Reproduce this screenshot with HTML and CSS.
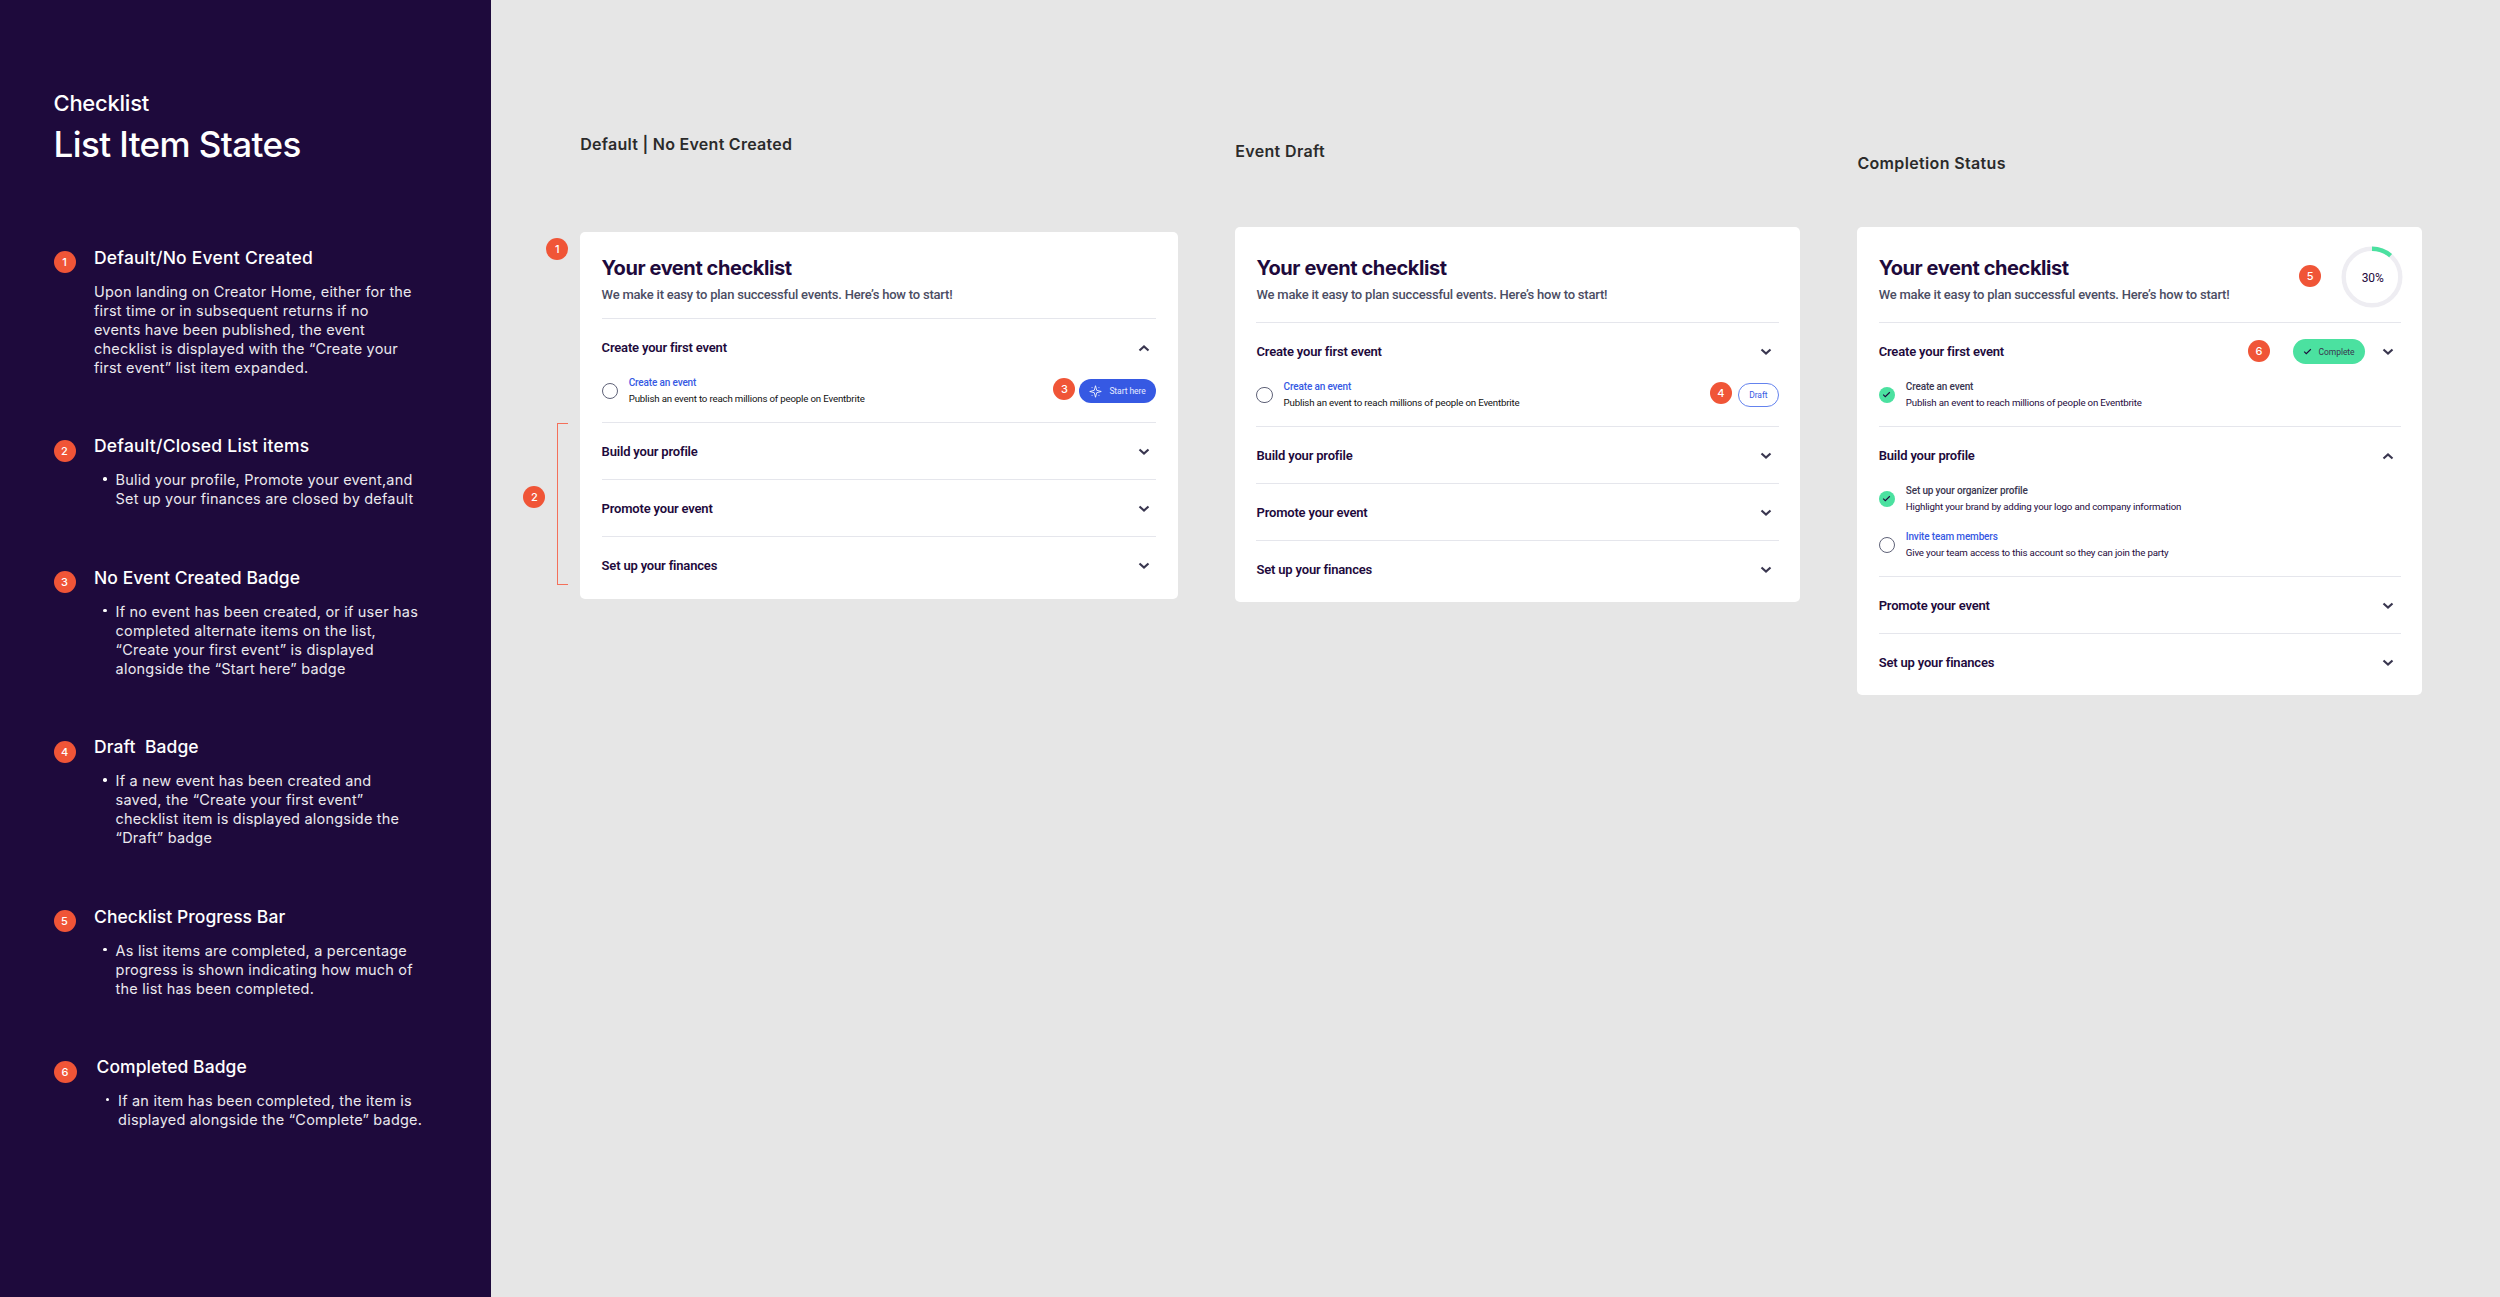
FILE: index.html
```html
<!DOCTYPE html>
<html lang="en">
<head>
  <meta charset="UTF-8">
  <meta name="viewport" content="width=device-width, initial-scale=1.0">
  <title>Checklist - List Item States</title>
  <link rel="stylesheet" href="styles.css">
</head>
<body>
  <!-- shared icons -->
  <svg class="sprite" width="0" height="0">
    <symbol id="chevron-down" viewBox="0 0 12 8">
      <path d="M1.5 1.4 L6 5.6 L10.5 1.4" fill="none" stroke="#39364f" stroke-width="2.1"/>
    </symbol>
    <symbol id="chevron-up" viewBox="0 0 12 8">
      <path d="M1.5 6.6 L6 2.4 L10.5 6.6" fill="none" stroke="#39364f" stroke-width="2.1"/>
    </symbol>
    <symbol id="check" viewBox="0 0 10 8">
      <path d="M1.2 4.2 L3.6 6.4 L8.8 1.4" fill="none" stroke="#1e0a3c" stroke-width="1.3"/>
    </symbol>
    <symbol id="spark" viewBox="0 0 14 14">
      <path d="M7 .8 L8.3 5.7 L13.2 7 L8.3 8.3 L7 13.2 L5.7 8.3 L.8 7 L5.7 5.7 Z" fill="none" stroke="#fff" stroke-width=".9"/>
      <path d="M2.8 2.8h1M10.2 2.8h1M2.8 11.2h1M10.2 11.2h1" stroke="#fff" stroke-width=".9"/>
    </symbol>
  </svg>

  <div class="page">
    <aside class="sidebar">
      <div class="eyebrow">Checklist</div>
      <h1>List Item States</h1>

      <div class="notes">
        <section class="note">
          <span class="marker">1</span>
          <div class="note-text">
            <h2 class="wide">Default/No Event Created</h2>
            <p>Upon landing on Creator Home, either for the<br>first time or in subsequent returns if no<br>events have been published, the event<br>checklist is displayed with the “Create your<br>first event” list item expanded.</p>
          </div>
        </section>
        <section class="note">
          <span class="marker">2</span>
          <div class="note-text">
            <h2 class="wide">Default/Closed List items</h2>
            <ul><li>Bulid your profile, Promote your event,and<br>Set up your finances are closed by default</li></ul>
          </div>
        </section>
        <section class="note">
          <span class="marker">3</span>
          <div class="note-text">
            <h2>No Event Created Badge</h2>
            <ul><li>If no event has been created, or if user has<br>completed alternate items on the list,<br>“Create your first event” is displayed<br>alongside the “Start here” badge</li></ul>
          </div>
        </section>
        <section class="note">
          <span class="marker">4</span>
          <div class="note-text">
            <h2>Draft&nbsp; Badge</h2>
            <ul><li>If a new event has been created and<br>saved, the “Create your first event”<br>checklist item is displayed alongside the<br>“Draft” badge</li></ul>
          </div>
        </section>
        <section class="note">
          <span class="marker">5</span>
          <div class="note-text">
            <h2>Checklist Progress Bar</h2>
            <ul><li>As list items are completed, a percentage<br>progress is shown indicating how much of<br>the list has been completed.</li></ul>
          </div>
        </section>
        <section class="note last">
          <span class="marker">6</span>
          <div class="note-text">
            <h2>Completed Badge</h2>
            <ul><li>If an item has been completed, the item is<br>displayed alongside the “Complete” badge.</li></ul>
          </div>
        </section>
      </div>
    </aside>

    <main class="boards">
      <div class="board board-default">
        <h3>Default | No Event Created</h3>
        <div class="card">
          <span class="marker pin pin-1">1</span>
          <span class="marker pin pin-2">2</span>
          <span class="bracket"></span>
          <span class="marker pin pin-3">3</span>
          <header class="card-head">
            <h4>Your event checklist</h4>
            <p>We make it easy to plan successful events. Here’s how to start!</p>
          </header>
          <div class="group">
            <div class="group-head"><span>Create your first event</span><svg class="chevron"><use href="#chevron-up"/></svg></div>
            <div class="items">
              <div class="item">
                <span class="circle"></span>
                <div class="item-text"><a>Create an event</a><p>Publish an event to reach millions of people on Eventbrite</p></div>
                <span class="tag tag-start"><svg class="spark"><use href="#spark"/></svg>Start here</span>
              </div>
            </div>
          </div>
          <div class="group"><div class="group-head"><span>Build your profile</span><svg class="chevron"><use href="#chevron-down"/></svg></div></div>
          <div class="group"><div class="group-head"><span>Promote your event</span><svg class="chevron"><use href="#chevron-down"/></svg></div></div>
          <div class="group"><div class="group-head"><span>Set up your finances</span><svg class="chevron"><use href="#chevron-down"/></svg></div></div>
        </div>
      </div>

      <div class="board board-draft">
        <h3>Event Draft</h3>
        <div class="card">
          <span class="marker pin pin-4">4</span>
          <header class="card-head">
            <h4>Your event checklist</h4>
            <p>We make it easy to plan successful events. Here’s how to start!</p>
          </header>
          <div class="group">
            <div class="group-head"><span>Create your first event</span><svg class="chevron"><use href="#chevron-down"/></svg></div>
            <div class="items">
              <div class="item">
                <span class="circle"></span>
                <div class="item-text"><a>Create an event</a><p>Publish an event to reach millions of people on Eventbrite</p></div>
                <span class="tag tag-draft">Draft</span>
              </div>
            </div>
          </div>
          <div class="group"><div class="group-head"><span>Build your profile</span><svg class="chevron"><use href="#chevron-down"/></svg></div></div>
          <div class="group"><div class="group-head"><span>Promote your event</span><svg class="chevron"><use href="#chevron-down"/></svg></div></div>
          <div class="group"><div class="group-head"><span>Set up your finances</span><svg class="chevron"><use href="#chevron-down"/></svg></div></div>
        </div>
      </div>

      <div class="board board-status">
        <h3>Completion Status</h3>
        <div class="card">
          <span class="marker pin pin-5">5</span>
          <span class="marker pin pin-6">6</span>
          <div class="progress">
            <svg viewBox="0 0 62 62">
              <circle cx="31" cy="31" r="28.3" fill="none" stroke="#eeedf2" stroke-width="4.4"/>
              <path d="M31 2.7 A28.3 28.3 0 0 1 49.6 9.7" fill="none" stroke="#4be1a0" stroke-width="4.4"/>
            </svg>
            <span>30%</span>
          </div>
          <header class="card-head">
            <h4>Your event checklist</h4>
            <p>We make it easy to plan successful events. Here’s how to start!</p>
          </header>
          <div class="group">
            <div class="group-head">
              <span>Create your first event</span>
              <span class="tag tag-complete"><svg class="check"><use href="#check"/></svg>Complete</span>
              <svg class="chevron"><use href="#chevron-down"/></svg>
            </div>
            <div class="items">
              <div class="item">
                <span class="circle done"><svg class="check"><use href="#check"/></svg></span>
                <div class="item-text"><a class="done-link">Create an event</a><p>Publish an event to reach millions of people on Eventbrite</p></div>
              </div>
            </div>
          </div>
          <div class="group">
            <div class="group-head"><span>Build your profile</span><svg class="chevron"><use href="#chevron-up"/></svg></div>
            <div class="items">
              <div class="item">
                <span class="circle done"><svg class="check"><use href="#check"/></svg></span>
                <div class="item-text"><a class="done-link">Set up your organizer profile</a><p>Highlight your brand by adding your logo and company information</p></div>
              </div>
              <div class="item">
                <span class="circle"></span>
                <div class="item-text"><a>Invite team members</a><p>Give your team access to this account so they can join the party</p></div>
              </div>
            </div>
          </div>
          <div class="group"><div class="group-head"><span>Promote your event</span><svg class="chevron"><use href="#chevron-down"/></svg></div></div>
          <div class="group"><div class="group-head"><span>Set up your finances</span><svg class="chevron"><use href="#chevron-down"/></svg></div></div>
        </div>
      </div>
    </main>
  </div>
</body>
</html>
```
FILE: styles.css
```css
* {
    box-sizing: border-box;
    margin: 0;
    padding: 0;
}
body {
    font-family: Inter, "Liberation Sans", sans-serif;
    background-color: #e6e6e6;
}
.sprite {
    display: block;
}
.page {
    display: flex;
    width: 2500px;
    height: 1297px;
}

/* sidebar */
.sidebar {
    width: 491px;
    flex-shrink: 0;
    padding: 88.6px 0 0 53.5px;
    background-color: #1e0a3c;
    color: white;
}
.eyebrow {
    font-size: 22px;
    font-weight: 500;
    line-height: 28px;
    letter-spacing: -0.25px;
}
h1 {
    margin-top: 5px;
    font-size: 35px;
    font-weight: 500;
    line-height: 44px;
    letter-spacing: -0.6px;
}
.notes {
    display: flex;
    flex-direction: column;
    gap: 58.6px;
    margin-top: 81.2px;
}
.note {
    display: flex;
    gap: 18.5px;
}
.note.last {
    gap: 20px;
}
.marker {
    display: flex;
    justify-content: center;
    align-items: center;
    flex-shrink: 0;
    width: 22px;
    height: 22px;
    border-radius: 50%;
    background-color: #f05537;
    color: white;
    font-size: 11px;
    font-weight: 500;
    line-height: 22px;
}
.note .marker {
    margin-top: 4.3px;
}
.note.last .marker {
    width: 23px;
}
h2 {
    font-size: 17.5px;
    font-weight: 500;
    line-height: 22px;
    letter-spacing: 0.06px;
}
h2.wide {
    letter-spacing: 0.23px;
}
.note p,
.note li {
    font-size: 14.5px;
    line-height: 19px;
    letter-spacing: 0.2px;
    color: #eae8ee;
    white-space: nowrap;
}
.note p,
.note ul {
    margin-top: 12.9px;
}
.note li {
    position: relative;
    padding-left: 21.6px;
    list-style: none;
}
.note li::before {
    content: "";
    position: absolute;
    left: 9.2px;
    top: 7px;
    width: 3.4px;
    height: 3.4px;
    border-radius: 50%;
    background-color: white;
}

/* boards */
.boards {
    display: flex;
    align-items: flex-start;
    gap: 57.5px;
    padding-left: 89.3px;
}
.board {
    width: 564.7px;
}
.board-default {
    width: 597.4px;
    padding-top: 134px;
}
.board-draft {
    padding-top: 141.3px;
}
.board-status {
    padding-top: 152.9px;
}
h3 {
    font-size: 16px;
    font-weight: 600;
    line-height: 20px;
    letter-spacing: 0.35px;
    color: #2b2b2b;
}
.board-default h3 {
    letter-spacing: 0.27px;
}
.card {
    position: relative;
    padding: 0 21.3px 5.5px;
    border-radius: 5px;
    background-color: white;
}
.board-default .card {
    margin-top: 78px;
}
.board-draft .card {
    margin-top: 65.7px;
}
.board-status .card {
    margin-top: 54.1px;
}
.card-head {
    padding: 28px 0 18px;
}
.board-default .card-head {
    padding: 23px 0 14px;
}
h4 {
    font-size: 20px;
    font-weight: 700;
    line-height: 26px;
    letter-spacing: -0.42px;
    color: #1e0a3c;
}
.card-head p {
    margin-top: 5px;
    font-family: Roboto, "Liberation Sans", sans-serif;
    font-size: 13px;
    font-weight: 500;
    line-height: 18px;
    letter-spacing: -0.21px;
    color: #4b4d63;
}
.group {
    border-top: 1px solid #e5e6ec;
    font-family: Roboto, "Liberation Sans", sans-serif;
}
.group-head {
    display: flex;
    align-items: center;
    height: 56px;
    padding: 1.4px 6.3px 0 0;
    font-size: 13px;
    font-weight: 600;
    letter-spacing: -0.18px;
    color: #1e0a3c;
}
.chevron {
    width: 12px;
    height: 8px;
    margin-left: auto;
}
.items {
    display: flex;
    flex-direction: column;
    gap: 14px;
    padding-bottom: 15px;
}
.item {
    display: flex;
    align-items: center;
    height: 32px;
}
.circle {
    display: flex;
    justify-content: center;
    align-items: center;
    width: 16.5px;
    height: 16.5px;
    border: 1.5px solid #5f6278;
    border-radius: 50%;
}
.circle.done {
    border: none;
    background-color: #4be1a0;
}
.check {
    width: 9px;
    height: 7px;
}
.item-text {
    margin-left: 10.6px;
    line-height: 16px;
    font-size: 9.7px;
    font-weight: 400;
}
.item-text a {
    display: block;
    font-size: 10px;
    font-weight: 500;
    letter-spacing: -0.15px;
    color: #3659e3;
}
.item-text a.done-link {
    color: #39364f;
}
.item-text p {
    letter-spacing: -0.17px;
    color: #111;
}
.board-status .item-text p {
    color: #1e0a3c;
}
.tag {
    display: flex;
    align-items: center;
    height: 24.5px;
    margin-left: auto;
    border-radius: 12.5px;
    font-size: 8.5px;
    font-weight: 400;
    letter-spacing: -0.07px;
}
.tag-start {
    width: 77.3px;
    padding-left: 10px;
    background-color: #3659e3;
    color: #e6ebff;
}
.spark {
    width: 13px;
    height: 13px;
    margin-right: 7.3px;
}
.tag-draft {
    justify-content: center;
    width: 40.5px;
    border: 1px solid #6483ee;
    color: #3659e3;
}
.tag-complete {
    width: 72.7px;
    padding-left: 10px;
    background-color: #4be1a0;
    color: #39364f;
}
.tag-complete .check {
    margin-right: 6.8px;
}
.tag-complete + .chevron {
    margin-left: 17px;
}

/* markers and bracket laid over the cards */
.pin {
    position: absolute;
}
.pin-1 {
    left: -34px;
    top: 6px;
}
.pin-2 {
    left: -57px;
    top: 254px;
}
.pin-3 {
    right: 102.3px;
    top: 146px;
}
.pin-4 {
    right: 68px;
    top: 155px;
}
.pin-5 {
    right: 101px;
    top: 38px;
}
.pin-6 {
    right: 152px;
    top: 113px;
}
.bracket {
    position: absolute;
    left: -23.3px;
    top: 191px;
    width: 11px;
    height: 162px;
    border: 1px solid #f4705a;
    border-right: none;
}
.progress {
    position: absolute;
    right: 19.3px;
    top: 19.5px;
    display: flex;
    justify-content: center;
    align-items: center;
    width: 62px;
    height: 62px;
}
.progress svg {
    position: absolute;
    width: 62px;
    height: 62px;
}
.progress span {
    position: relative;
    top: 1px;
    left: 1px;
    font-family: Roboto, "Liberation Sans", sans-serif;
    font-size: 12px;
    font-weight: 400;
    color: #1e0a3c;
}
```
